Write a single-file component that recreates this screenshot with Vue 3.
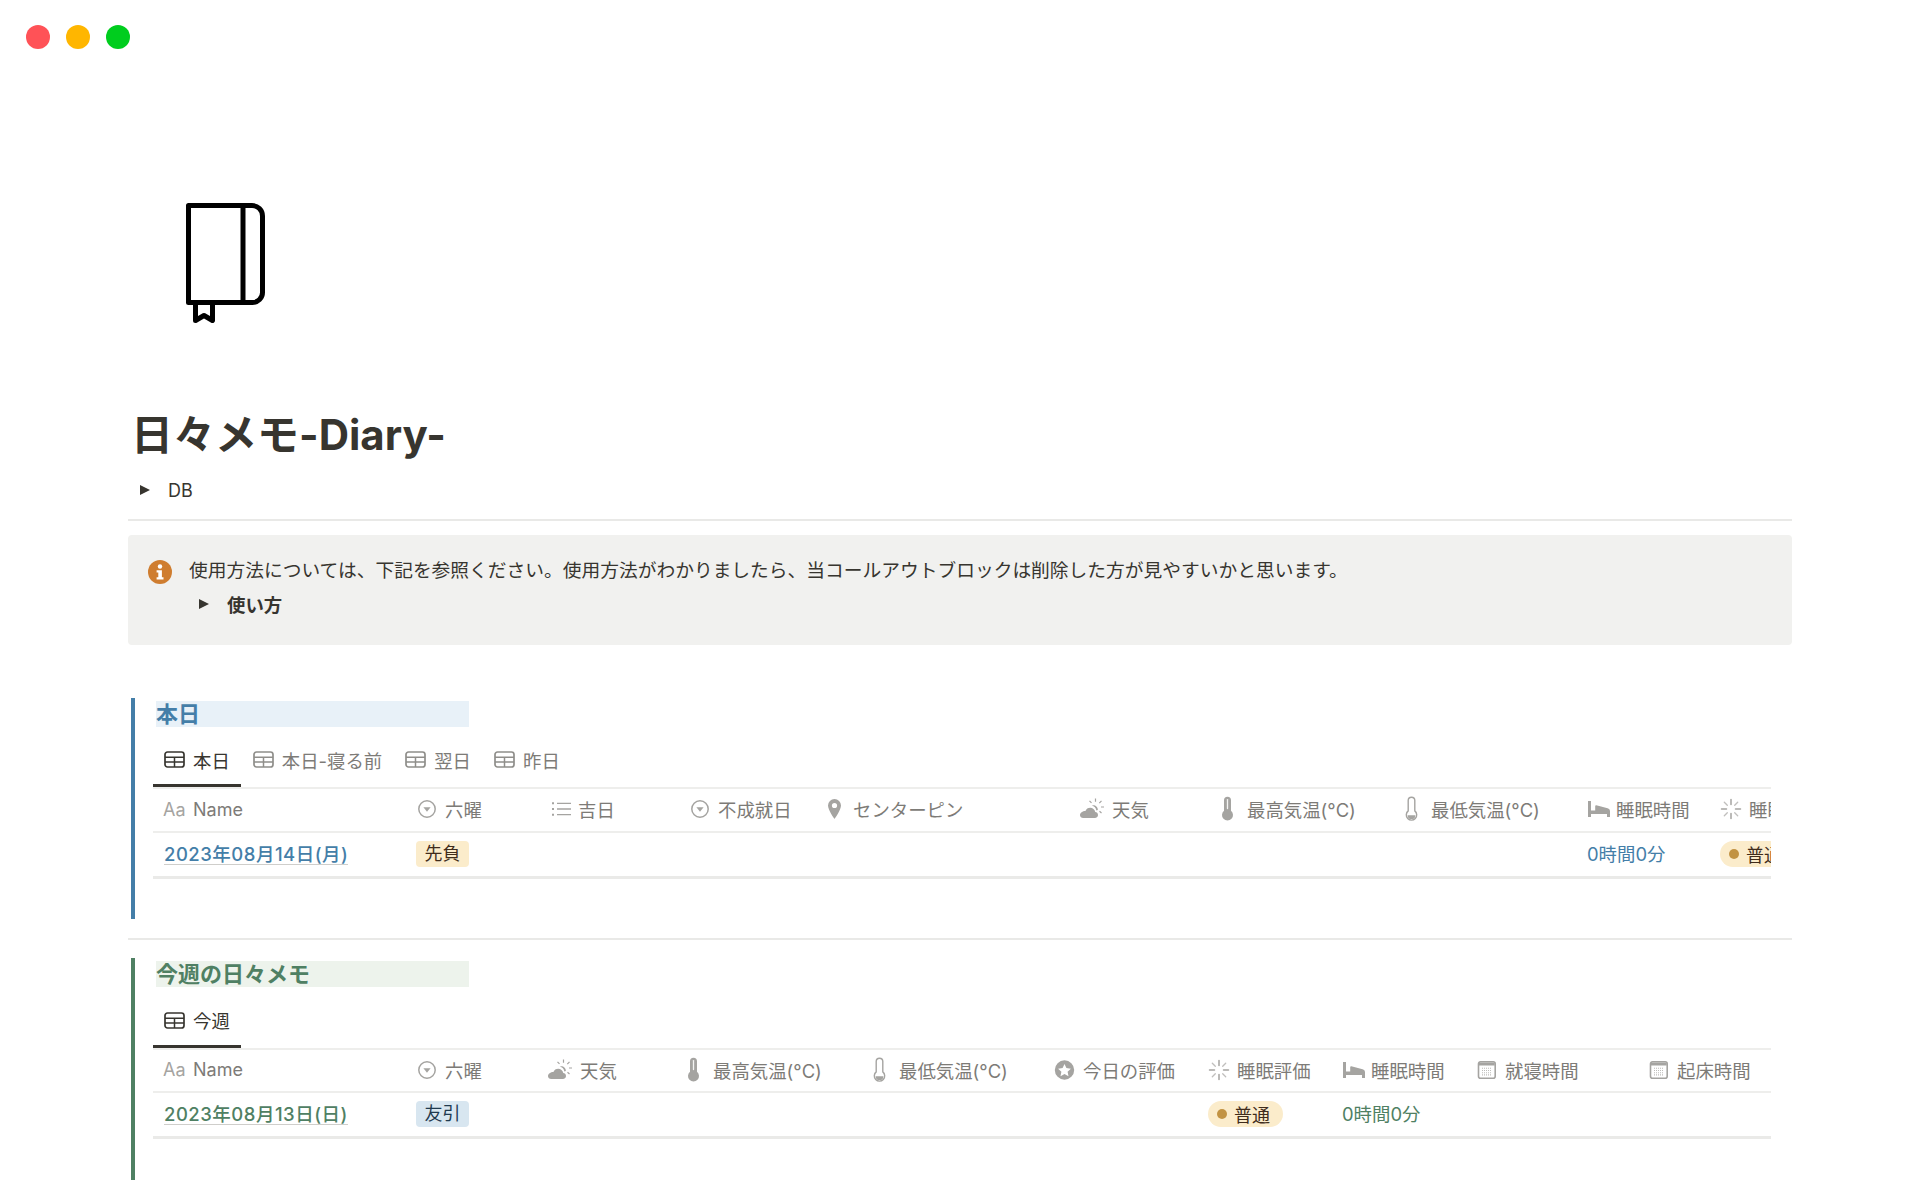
<script setup>
const G = '#a5a4a1'
const I = {
  select: [
    { d: 'M11 3.800a8.200 8.200 0 1 0 0 16.400 8.200 8.200 0 0 0 0-16.400z', fill: 'none', stroke: G, 'stroke-width': 1.5 },
    { d: 'M7.400 10.200h7.200L11 14.800z', fill: G }
  ],
  list: [
    { d: 'M8 6.300h14M8 12h14M8 17.700h14', fill: 'none', stroke: G, 'stroke-width': 1.300 },
    { d: 'M3 5.300h2v2H3zM3 11h2v2H3zM3 16.700h2v2H3z', fill: G }
  ],
  pin: [
    { d: 'M10.500 2A6.500 6.500 0 0 0 4 8.500C4 13 10.500 22 10.500 22S17 13 17 8.500A6.500 6.500 0 0 0 10.500 2zm0 3.900a2.600 2.600 0 1 1 0 5.200 2.600 2.600 0 0 1 0-5.200z', fill: G, 'fill-rule': 'evenodd' }
  ],
  weather: [
    { d: 'M5.200 21h11.600c2 0 3.200-1.400 3.200-3 0-1.700-1.300-2.800-2.700-2.900-.5-2.600-2.700-4.400-5.100-4.400-2.200 0-4 1.200-4.800 3.300C4.600 14 2 15.800 2 18.200 2 19.800 3.400 21 5.200 21z', fill: G },
    { d: 'M13.800 8.700a4.300 4.300 0 0 1 6 4.400l-1.400.3a5.800 5.800 0 0 0-4.600-4.700z', fill: G },
    { d: 'M17.500 1.500v3.200M23.500 3.800l-2.200 2.300M26 10h-3M23.500 16l-2-1.700M11.500 3.800l2 2.100', fill: 'none', stroke: G, 'stroke-width': 1.200 }
  ],
  thermoFull: [
    { d: 'M6 3.300a3.500 3.500 0 0 1 7 0v10.500a5.500 5.500 0 1 1-7 0z', fill: G },
    { d: 'M9.500 2.600v9', fill: 'none', stroke: '#f4f4f3', 'stroke-width': 1.300, 'stroke-linecap': 'round' }
  ],
  thermo: [
    { d: 'M6.200 3.500a3.300 3.300 0 0 1 6.600 0v10.400a5.200 5.200 0 1 1-6.600 0z', fill: 'none', stroke: G, 'stroke-width': 1.400 },
    { d: 'M5.600 18.200h7.800a3.900 3.900 0 0 1-7.800 0z', fill: G }
  ],
  bed: [
    { d: 'M1 4h3v9.500h4.200V9.200c0-.7.400-1 1.100-.9l11.300 2.900c1.500.4 2.400 1.500 2.400 3V20h-3v-3H4v3H1z', fill: G }
  ],
  spin: [
    { d: 'M11 2.500v5M11 16.500v5M1.500 12h5M15.500 12h5', fill: 'none', stroke: G, 'stroke-width': 1.500, 'stroke-linecap': 'round' },
    { d: 'M4.300 5.300l3 3M14.700 15.700l3 3M4.300 18.700l3-3M14.700 8.300l3-3', fill: 'none', stroke: G, 'stroke-width': 1.300, 'stroke-linecap': 'round', opacity: .7 }
  ],
  star: [
    { d: 'M10.500 2.300a9.700 9.700 0 1 0 0 19.400 9.700 9.700 0 0 0 0-19.400zm0 3.700 1.900 4.100 4.500.6-3.300 3.100.9 4.400-4-2.200-4 2.200.9-4.400-3.300-3.100 4.500-.6z', fill: G, 'fill-rule': 'evenodd' }
  ],
  cal: [
    { d: 'M4.500 3.800h12.700a2 2 0 0 1 2 2v12.400a2 2 0 0 1-2 2H4.500a2 2 0 0 1-2-2V5.800a2 2 0 0 1 2-2z', fill: 'none', stroke: G, 'stroke-width': 1.600 },
    { d: 'M3 4.500h15.700v3H3z', fill: G },
    { d: 'M6 10.300h10M6 12.500h10M6 14.700h10M6 16.900h10', fill: 'none', stroke: '#bdbcb9', 'stroke-width': 1.100, 'stroke-dasharray': '1 1' }
  ]
}

const views = [
  {
    tone: 'blue', title: '本日',
    tabs: ['本日', '本日-寝る前', '翌日', '昨日'],
    widths: [255, 133, 140, 135, 256, 138, 184, 185, 133, 120],
    heads: [
      { icon: 'select', label: '六曜' }, { icon: 'list', label: '吉日' }, { icon: 'select', label: '不成就日' },
      { icon: 'pin', label: 'センターピン' }, { icon: 'weather', label: '天気' }, { icon: 'thermoFull', label: '最高気温(°C)' },
      { icon: 'thermo', label: '最低気温(°C)' }, { icon: 'bed', label: '睡眠時間' }, { icon: 'spin', label: '睡眠評価' }
    ],
    date: '2023年08月14日(月)',
    cells: [{ tag: '先負', kind: 'yellow' }, {}, {}, {}, {}, {}, {}, { text: '0時間0分' }, { status: '普通' }]
  },
  {
    tone: 'green', title: '今週の日々メモ',
    tabs: ['今週'],
    widths: [255, 132, 136, 186, 184, 154, 134, 134, 172, 131],
    heads: [
      { icon: 'select', label: '六曜' }, { icon: 'weather', label: '天気' }, { icon: 'thermoFull', label: '最高気温(°C)' },
      { icon: 'thermo', label: '最低気温(°C)' }, { icon: 'star', label: '今日の評価' }, { icon: 'spin', label: '睡眠評価' },
      { icon: 'bed', label: '睡眠時間' }, { icon: 'cal', label: '就寝時間' }, { icon: 'cal', label: '起床時間' }
    ],
    date: '2023年08月13日(日)',
    cells: [{ tag: '友引', kind: 'blue' }, {}, {}, {}, {}, { status: '普通' }, { text: '0時間0分' }, {}, {}]
  }
]

const gridStyle = (v) => ({ gridTemplateColumns: v.widths.map((w) => w + 'px').join(' ') })
</script>

<template>
  <div class="page">
    <div class="traffic">
      <span class="dot red"></span>
      <span class="dot amber"></span>
      <span class="dot lime"></span>
    </div>

    <svg class="book" viewBox="0 0 79 120" width="79" height="120">
      <path d="M2.500 2.500H66a10.500 10.500 0 0 1 10.500 10.500V89.500a10 10 0 0 1-10 10H2.500z" fill="none" stroke="#000" stroke-width="5" stroke-linejoin="round" />
      <path d="M57 2.500V99.500" fill="none" stroke="#000" stroke-width="5" />
      <path d="M9.500 100v17.500L18 112.500l8.500 5V100" fill="none" stroke="#000" stroke-width="5" stroke-linejoin="round" />
    </svg>

    <main class="content">
      <h1 class="title">日々メモ-Diary-</h1>
      <div class="toggle db">
        <span class="tri"></span>
        <span class="db-text">DB</span>
      </div>
      <hr class="rule first" />

      <div class="callout">
        <svg class="info" viewBox="0 0 24 24" width="24" height="24">
          <circle cx="12" cy="12" r="12" fill="#cf7d2f" />
          <circle cx="12" cy="6.500" r="2.200" fill="#fff" />
          <path d="M8.600 10.200h5.300v7h1.600v2.300H8.600v-2.300h1.700v-4.700H8.600z" fill="#fff" />
        </svg>
        <div class="callout-body">
          <p class="callout-text">使用方法については、下記を参照ください。使用方法がわかりましたら、当コールアウトブロックは削除した方が見やすいかと思います。</p>
          <div class="toggle howto">
            <span class="tri"></span>
            <span class="howto-text">使い方</span>
          </div>
        </div>
      </div>

      <template v-for="(v, vi) in views" :key="v.title">
        <hr v-if="vi === 1" class="rule mid" />
        <section class="view" :class="[v.tone, vi === 0 ? 'view-a' : 'view-b']">
          <h2 class="heading"><span class="heading-text">{{ v.title }}</span></h2>
          <div class="frame">
            <div class="tabs">
              <div v-for="(t, ti) in v.tabs" :key="t" class="tab" :class="{ active: ti === 0 }">
                <svg class="tab-icon" viewBox="0 0 21 17" width="21" height="17">
                  <rect x="1" y="1" width="19" height="15" rx="2.500" fill="none" stroke="currentColor" stroke-width="1.700" />
                  <path d="M1 6.200h19M1 11h19M10.500 6.200V16" fill="none" stroke="currentColor" stroke-width="1.500" />
                </svg>
                <span>{{ t }}</span>
              </div>
            </div>
            <div class="grid head" :style="gridStyle(v)">
              <div class="th">
                <span class="aa">Aa</span><span class="name">Name</span>
              </div>
              <div v-for="h in v.heads" :key="h.label" class="th">
                <svg class="ic" :class="'ic-' + h.icon" viewBox="0 0 22 24" width="22" height="24">
                  <path v-for="(p, pi) in I[h.icon]" :key="pi" v-bind="p" />
                </svg>
                <span class="th-label">{{ h.label }}</span>
              </div>
            </div>
            <div class="grid body" :style="gridStyle(v)">
              <div class="td"><span class="date">{{ v.date }}</span></div>
              <div v-for="(c, ci) in v.cells" :key="ci" class="td">
                <span v-if="c.tag" class="tag" :class="c.kind">{{ c.tag }}</span>
                <span v-else-if="c.status" class="status"><i class="status-dot"></i>{{ c.status }}</span>
                <span v-else-if="c.text" class="value">{{ c.text }}</span>
              </div>
            </div>
          </div>
        </section>
      </template>
    </main>
  </div>
</template>

<style>
html, body { margin: 0; background: #fff; }
</style>

<style scoped>
.page {
  width: 1920px;
  height: 1200px;
  overflow: hidden;
  background: #fff;
  color: #37352f;
  font-family: Inter, "Noto Sans CJK JP", sans-serif;
}
.traffic { display: flex; gap: 16px; padding: 25px 0 0 26px; height: 24px; }
.dot { width: 24px; height: 24px; border-radius: 50%; }
.red { background: #ff5257; }
.amber { background: #ffb600; }
.lime { background: #00cd1e; }
.book { display: block; margin: 154px 0 0 186px; }
.content { width: 1664px; margin-left: 128px; }
.title { margin: 84px 0 0 3px; font-size: 42px; line-height: 56px; height: 56px; font-weight: 700; color: #37352f; }
.toggle { display: flex; align-items: center; }
.tri { width: 0; height: 0; border-left: 10px solid #37352f; border-top: 5.500px solid transparent; border-bottom: 5.500px solid transparent; }
.db { height: 30px; margin-top: 12px; padding-left: 12px; }
.db-text { margin-left: 18px; font-size: 18px; }
.rule { border: 0; height: 2px; background: #e9e9e7; margin: 0; }
.first { margin-top: 14px; }
.callout { display: flex; height: 110px; margin-top: 14px; background: #f1f1ef; border-radius: 4px; box-sizing: border-box; padding: 24px 0 0 20px; }
.info { flex: none; margin-top: 1px; }
.callout-body { margin-left: 17px; }
.callout-text { margin: 0; font-size: 18.740px; line-height: 24px; white-space: nowrap; }
.howto { height: 30px; margin-top: 6px; padding-left: 10px; }
.howto-text { margin-left: 18px; font-size: 18.400px; font-weight: 600; }
.view { position: relative; margin-left: 3px; padding: 3px 21px 0 21px; border-left: 4px solid; box-sizing: border-box; width: 1640px; }
.view-a { margin-top: 53px; height: 221px; }
.view-b { margin-top: 18px; height: 222px; }
.mid { margin-top: 19px; }
.blue { border-color: #447ea8; }
.green { border-color: #4f8063; }
.heading { margin: 0; width: 313px; height: 26px; font-size: 22px; line-height: 27px; font-weight: 600; }
.heading-text { display: block; width: 313px; height: 26px; white-space: nowrap; }
.blue .heading-text { background: #e8f1f8; color: #447ea8; }
.green .heading-text { background: #edf3ec; color: #4f8063; }
.frame { margin-left: -3px; width: 1618px; overflow: hidden; }
.tabs { display: flex; gap: 1px; border-bottom: 2px solid #eeeeec; }
.view-a .tabs { height: 60px; }
.view-b .tabs { height: 61px; }
.tab { display: flex; align-items: center; gap: 8px; height: 100%; padding: 5px 11px 0 11px; box-sizing: border-box; font-size: 18.400px; color: #7d7b77; }
.tab-icon { color: #8f8e8a; }
.tab.active { color: #37352f; box-shadow: inset 0 -3px 0 #37352f; }
.tab.active .tab-icon { color: #37352f; }
.grid { display: grid; }
.head { border-bottom: 2px solid #eeeeec; }
.view-a .head { height: 42px; }
.view-b .head { height: 41px; }
.body { height: 43px; border-bottom: 3px solid #eaeae8; }
.th { display: flex; align-items: center; padding: 0 0 2px 8px; box-sizing: border-box; white-space: nowrap; font-size: 18.400px; color: #7d7b77; min-width: 0; overflow: hidden; }
.aa { width: 29px; margin-left: 2px; margin-right: 1px; color: #a5a4a1; font-size: 18px; }
.name { font-size: 18px; }
.ic { flex: none; margin-right: 7px; overflow: visible; }
.ic-weather { margin-left: -2px; margin-right: 12px; }
.th-label { display: block; }
.td { display: flex; align-items: center; padding: 0 0 2px 8px; white-space: nowrap; min-width: 0; overflow: hidden; font-size: 18.400px; box-sizing: border-box; }
.date { margin: 1px 0 0 3px; font-size: 18.500px; letter-spacing: .5px; font-weight: 500; line-height: 20px; border-bottom: 1px solid #cfcecb; }
.blue .date, .blue .value { color: #447ea8; }
.green .date, .green .value { color: #4f8063; }
.value { margin-bottom: 2px; }
.tag { width: 53px; height: 26px; line-height: 26px; text-align: center; border-radius: 4px; font-size: 18px; color: #402c1b; }
.tag.yellow { background: #fbeccb; }
.tag.blue { background: #d8e6f0; color: #1f3a4f; border: 0; }
.status { display: inline-flex; align-items: center; height: 26px; padding: 0 13px 0 9px; border-radius: 13px; background: #fbeccb; color: #402c1b; font-size: 18px; }
.status-dot { width: 10px; height: 10px; border-radius: 50%; background: #c29343; margin-right: 7px; }
</style>
